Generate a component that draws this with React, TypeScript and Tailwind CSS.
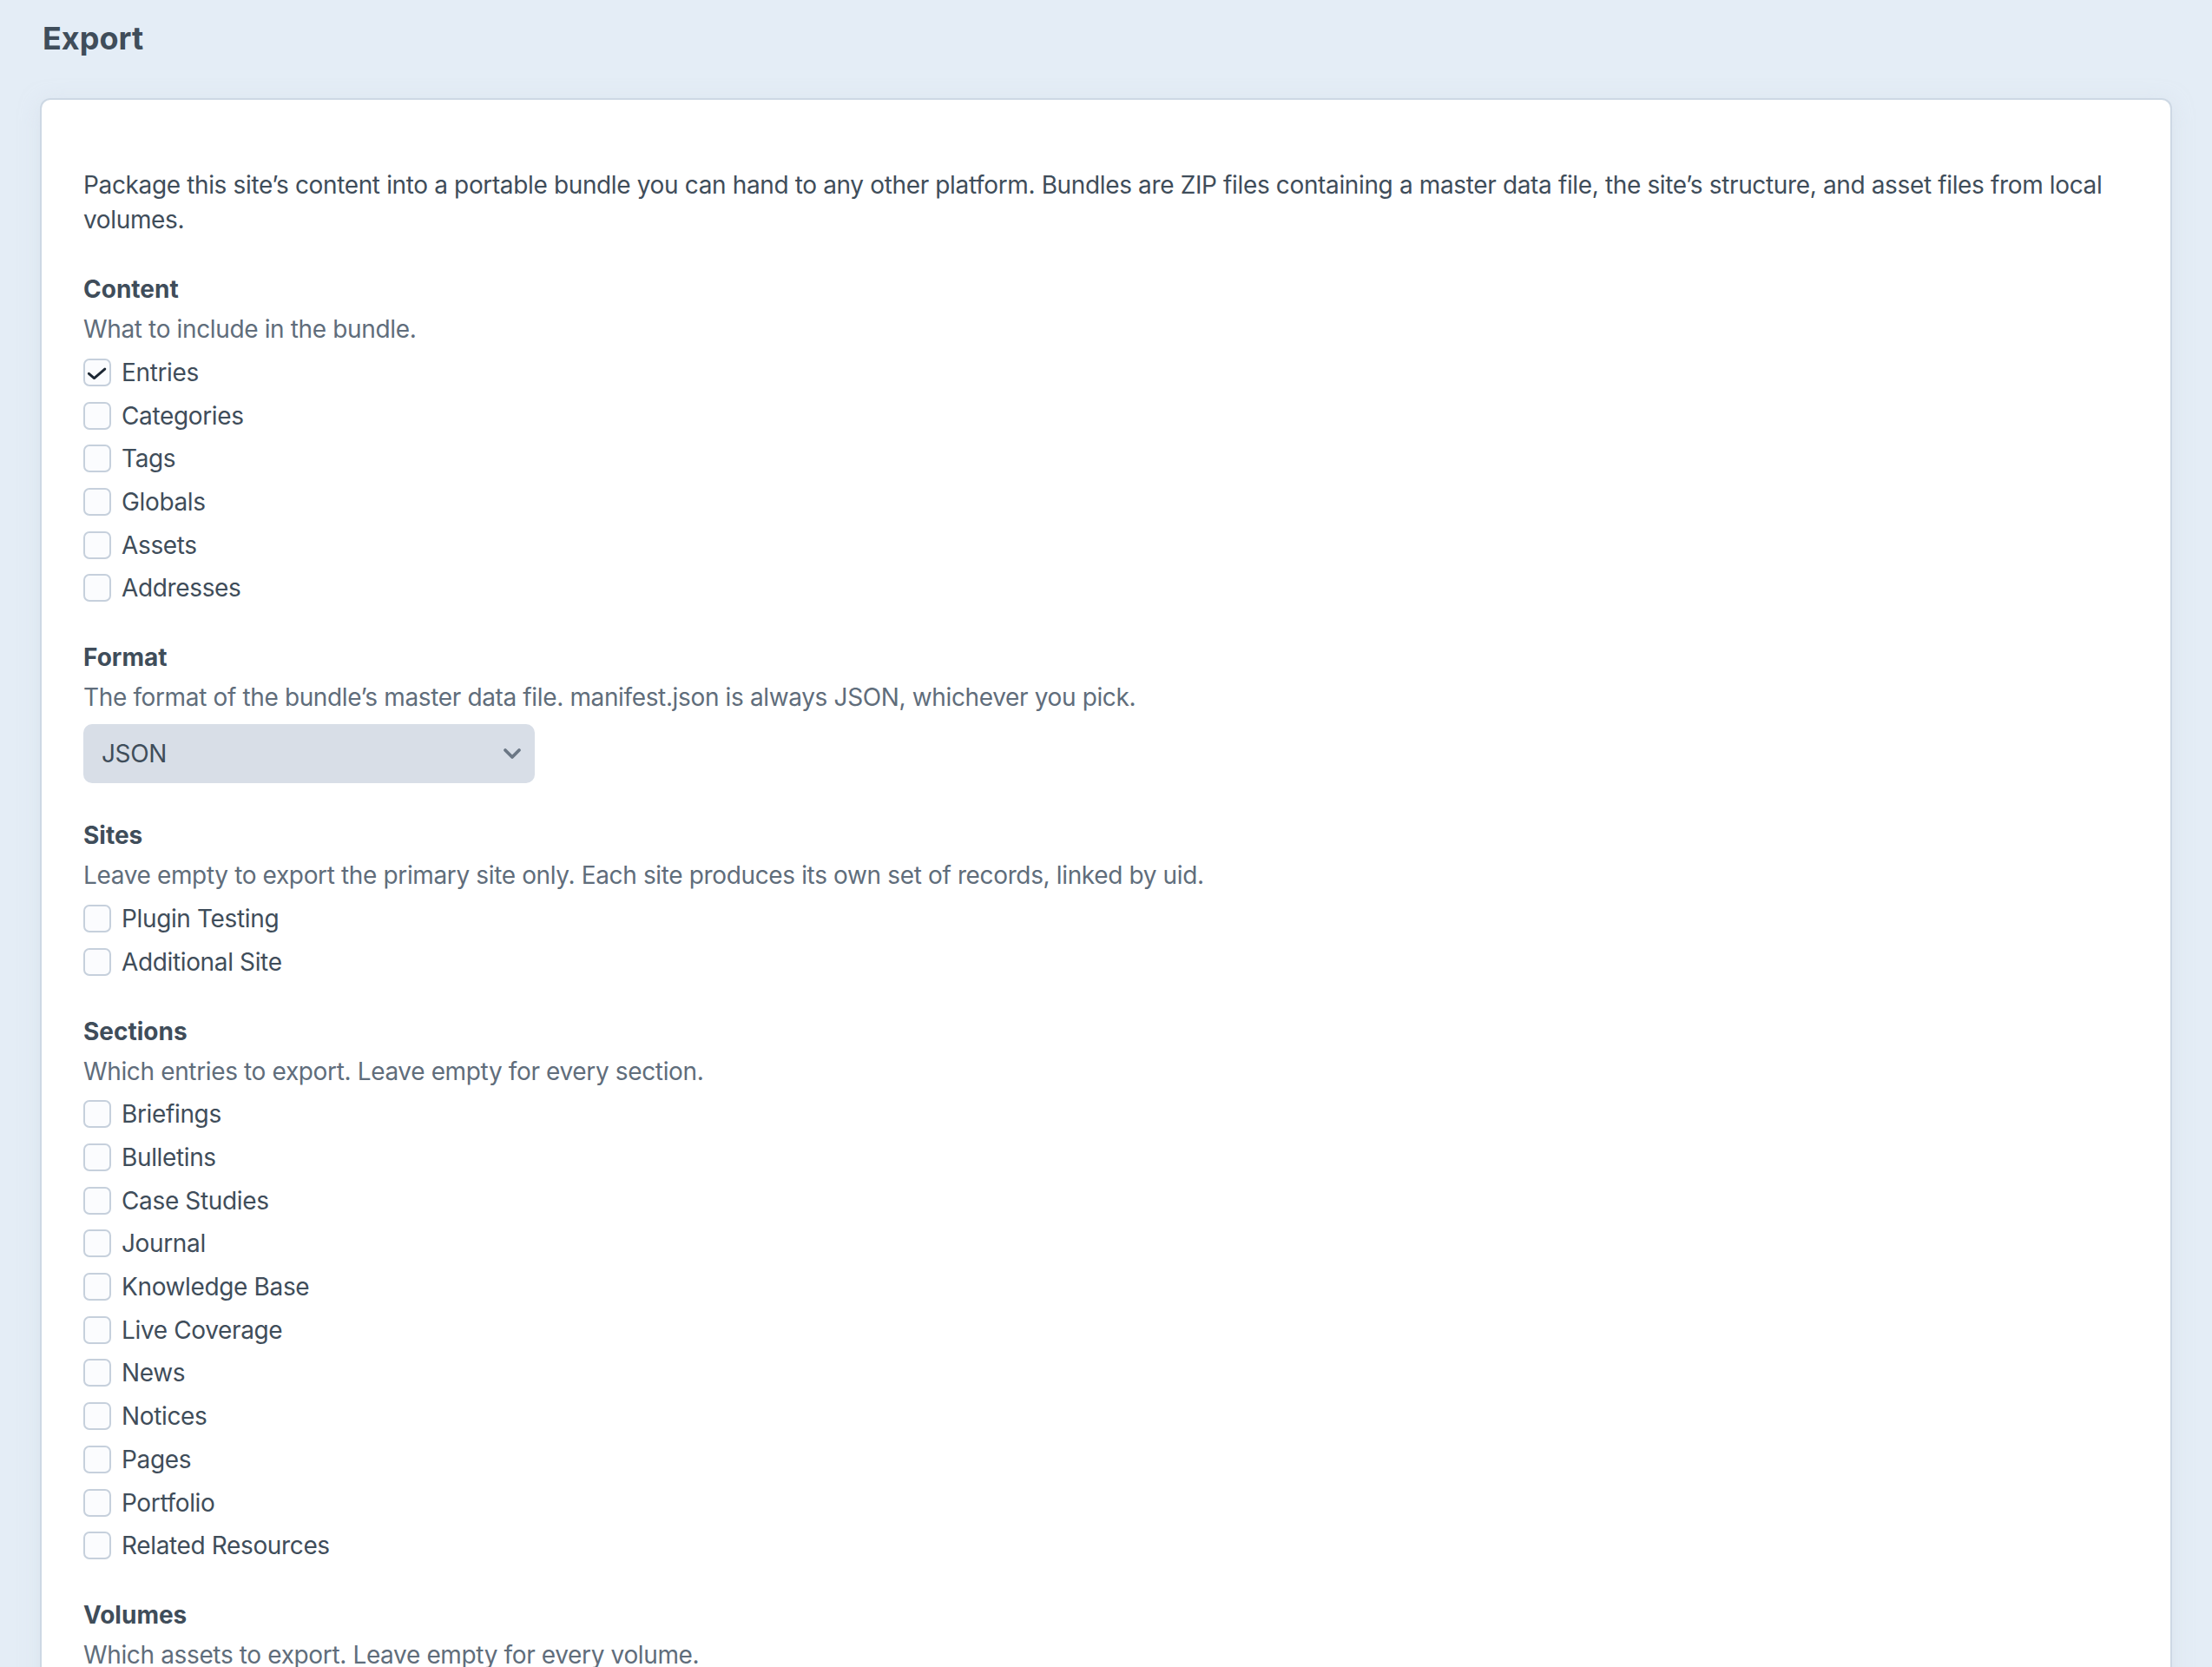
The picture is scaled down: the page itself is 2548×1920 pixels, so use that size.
import React, { useState } from "react";

const contentOptions = ["Entries", "Categories", "Tags", "Globals", "Assets", "Addresses"];
const siteOptions = ["Plugin Testing", "Additional Site"];
const sectionOptions = [
  "Briefings",
  "Bulletins",
  "Case Studies",
  "Journal",
  "Knowledge Base",
  "Live Coverage",
  "News",
  "Notices",
  "Pages",
  "Portfolio",
  "Related Resources",
];

function CheckRow({ label, checked, onToggle }: { label: string; checked: boolean; onToggle: () => void }) {
  return (
    <label className="flex h-[49.7px] cursor-pointer items-center gap-[12px]">
      <span
        onClick={onToggle}
        className="flex h-[32px] w-[32px] shrink-0 items-center justify-center rounded-[7px] border-2 border-[#c6d0dc] bg-[#fbfcfe]"
      >
        {checked && (
          <svg width="32" height="32" viewBox="0 0 32 32" fill="none">
            <polyline
              points="5,17.5 12,23.5 26,11.5"
              stroke="#1d2834"
              strokeWidth="3.4"
              strokeLinecap="round"
              strokeLinejoin="round"
            />
          </svg>
        )}
      </span>
      <span className="leading-[40px] text-[#3f4d5a]">{label}</span>
    </label>
  );
}

function FieldHead({ label, instructions }: { label: string; instructions: string }) {
  return (
    <>
      <div className="font-bold leading-[40px] tracking-normal text-[#3f4d5a]">{label}</div>
      <div className="mt-[6px] leading-[40px] text-[#606d7b]">{instructions}</div>
    </>
  );
}

function CheckGroup({
  options,
  checked,
  toggle,
}: {
  options: string[];
  checked: Record<string, boolean>;
  toggle: (k: string) => void;
}) {
  return (
    <div className="mt-[5px] flex flex-col">
      {options.map((o) => (
        <CheckRow key={o} label={o} checked={!!checked[o]} onToggle={() => toggle(o)} />
      ))}
    </div>
  );
}

export default function App() {
  const [checked, setChecked] = useState<Record<string, boolean>>({ Entries: true });
  const toggle = (k: string) => setChecked((c) => ({ ...c, [k]: !c[k] }));

  return (
    <div
      className="h-screen overflow-hidden bg-[#e4edf6] text-[28px] tracking-[-0.36px] text-[#3f4d5a]"
      style={{ fontFamily: "Inter, 'Noto Sans', sans-serif" }}
    >
      <header className="h-[115px] px-[49px] pt-[22px]">
        <h1 className="text-[36px] font-bold leading-[44px] tracking-normal text-[#3f4d5a]">Export</h1>
      </header>

      <main className="mx-[48px] min-h-[2000px] rounded-[10px] bg-white px-[48px] pt-[78px] shadow-[0_0_0_2px_#cdd8e4,0_4px_24px_rgba(205,216,228,0.5)]">
        <p className="leading-[40px] text-[#3f4d5a]">
          Package this site’s content into a portable bundle you can hand to any other platform. Bundles are ZIP files
          containing a master data file, the site’s structure, and asset files from local volumes.
        </p>

        <section className="mt-[40px]">
          <FieldHead label="Content" instructions="What to include in the bundle." />
          <CheckGroup options={contentOptions} checked={checked} toggle={toggle} />
        </section>

        <section className="mt-[35px]">
          <FieldHead
            label="Format"
            instructions="The format of the bundle’s master data file. manifest.json is always JSON, whichever you pick."
          />
          <div className="relative mt-[11px] flex h-[68px] w-[520px] items-center rounded-[10px] bg-[#d8dee7] pl-[21px] pr-[48px]">
            <span className="leading-[40px] text-[#3f4d5a]">JSON</span>
            <svg
              className="absolute right-[15px] top-1/2 -translate-y-1/2"
              width="22"
              height="14"
              viewBox="0 0 22 14"
              fill="none"
            >
              <polyline
                points="3,3 11,11 19,3"
                stroke="#6b7785"
                strokeWidth="3.8"
                strokeLinecap="round"
                strokeLinejoin="round"
              />
            </svg>
          </div>
        </section>

        <section className="mt-[40px]">
          <FieldHead
            label="Sites"
            instructions="Leave empty to export the primary site only. Each site produces its own set of records, linked by uid."
          />
          <CheckGroup options={siteOptions} checked={checked} toggle={toggle} />
        </section>

        <section className="mt-[35px]">
          <FieldHead label="Sections" instructions="Which entries to export. Leave empty for every section." />
          <CheckGroup options={sectionOptions} checked={checked} toggle={toggle} />
        </section>

        <section className="mt-[35px]">
          <FieldHead label="Volumes" instructions="Which assets to export. Leave empty for every volume." />
        </section>
      </main>
    </div>
  );
}
